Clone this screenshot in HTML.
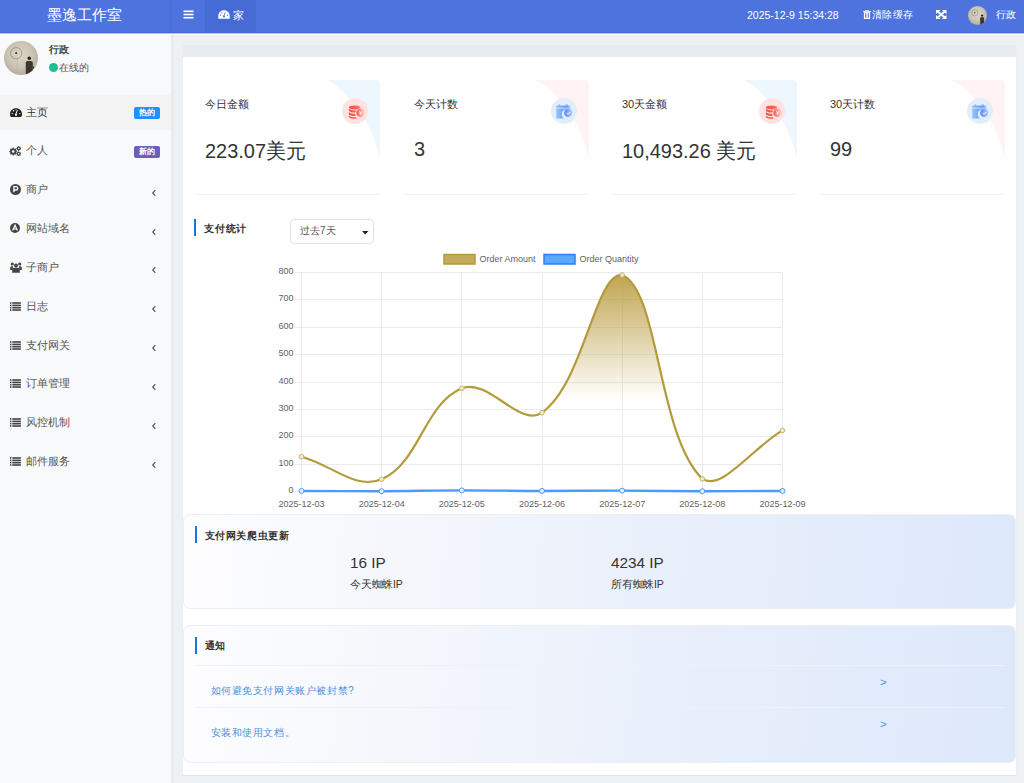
<!DOCTYPE html>
<html><head><meta charset="utf-8">
<style>
*{margin:0;padding:0;box-sizing:border-box}
html,body{width:1024px;height:783px;overflow:hidden;background:#eef1f4;font-family:"Liberation Sans",sans-serif;color:#333}
.abs{position:absolute}
#hdr{position:absolute;z-index:10;left:0;top:0;width:1024px;height:32px;background:#4e73df;box-shadow:0 1px 0 #4769d9,0 2px 0 #b4c2ef,0 3px 0 rgba(255,255,255,.7)}
#logo{position:absolute;left:0;top:-2px;width:168px;height:33px;color:#fff;font-size:15px;line-height:33px;text-align:center;font-weight:300}
#hdiv{position:absolute;left:170px;top:0;width:1px;height:32px;background:#4a6ed6}
#tab{position:absolute;left:205px;top:0;width:51px;height:32px;background:#476bd4}
.wt{color:#fff;font-size:11px;position:absolute;white-space:nowrap}
#side{position:absolute;left:0;top:33px;width:171px;height:750px;background:#f8f9fb}
#sshadow{position:absolute;left:171px;top:33px;width:4px;height:750px;background:linear-gradient(90deg,#e6eaed,#eef1f4)}
.mi{position:absolute;left:0;width:171px;height:35px}
.mi .t{position:absolute;left:26px;top:0;line-height:35px;font-size:11px;color:#555}
.mi .ic{position:absolute;left:9px;top:12px;width:12px;height:11px}
.chev{position:absolute;left:150px;top:15.5px;width:8px;height:10px}
.badge{position:absolute;left:134px;top:12.5px;width:26px;height:12px;border-radius:2px;color:#fff;font-size:8px;font-weight:bold;line-height:12px;text-align:center}
#panel{position:absolute;left:183px;top:45px;width:833px;height:730px;background:#fff;box-shadow:0 1px 1px rgba(0,0,0,.05)}
#phead{position:absolute;left:0;top:0;width:833px;height:12px;background:#e8ecef}
.card{position:absolute;top:80px;width:187px;height:114px;background:#fff;border-radius:4px;box-shadow:0 1px 0 rgba(0,0,0,.055);overflow:hidden}
.card .deco{position:absolute;right:0;top:0;width:60px;height:114px}
.card .lbl{position:absolute;left:12px;top:16.5px;font-size:11px;color:#333;white-space:nowrap}
.card .val{position:absolute;left:12px;top:57px;font-size:21px;transform:scaleX(.95);transform-origin:0 0;color:#333;white-space:nowrap}
.card .icb{position:absolute;left:149px;top:18px;width:26px;height:26px;border-radius:50%}
.sec{position:absolute;left:183px;width:833px;border-radius:7px;background:linear-gradient(95deg,#fdfdfe 0%,#f5f7fc 25%,#eaf0fb 55%,#dde8fb 100%);border:1px solid #eceff3}
.bar{position:absolute;width:2px;height:17px;background:#1a73e8}
.stitle{position:absolute;font-size:11px;font-weight:bold;color:#333;white-space:nowrap}
</style></head><body>
<div id="hdr">
  <div id="logo">墨逸工作室</div>
  <div id="hdiv"></div>
  <div id="tab"></div>
  <svg class="abs" style="left:183px;top:10px" width="11" height="9" viewBox="0 0 11 9"><rect x="0.5" y="0.5" width="10" height="1.6" fill="#fff"/><rect x="0.5" y="3.7" width="10" height="1.6" fill="#fff"/><rect x="0.5" y="6.9" width="10" height="1.6" fill="#fff"/></svg>
  <svg class="abs" style="left:218px;top:10px" width="12" height="9" viewBox="0 0 12 9"><path d="M6 0.3C2.8 0.3 0.3 2.8 0.3 6v2.7h11.4V6C11.7 2.8 9.2 0.3 6 0.3z" fill="#fff"/><circle cx="6" cy="6.5" r="1" fill="#476bd4"/><path d="M5.5 6.5L7.2 2.5" stroke="#476bd4" stroke-width="0.9"/><circle cx="2.5" cy="5.2" r=".6" fill="#476bd4"/><circle cx="9.5" cy="5.2" r=".6" fill="#476bd4"/><circle cx="3.8" cy="2.8" r=".6" fill="#476bd4"/></svg>
  <div class="wt" style="left:233px;top:7.5px;font-size:11px">家</div>
  <div class="wt" style="left:747px;top:9px;font-size:10.5px">2025-12-9 15:34:28</div>
  <svg class="abs" style="left:863px;top:10px" width="8" height="9" viewBox="0 0 8 9"><path d="M0 1.2h8v1H0z" fill="#fff"/><path d="M2.4 1.4V.4h3.2v1" stroke="#fff" stroke-width=".8" fill="none"/><path d="M.9 2.2h6.2V9H.9z" fill="#fff"/><rect x="2.1" y="3.2" width="1.2" height="4.6" fill="#7f6ce6"/><rect x="4.7" y="3.2" width="1.2" height="4.6" fill="#7f6ce6"/></svg>
  <div class="wt" style="left:871.5px;top:7.6px;font-size:10px;letter-spacing:.6px">清除缓存</div>
  <svg class="abs" style="left:936px;top:10px" width="10.5" height="9" viewBox="0 0 10.5 9"><path d="M0 0h4.6L0 4z M10.5 0H5.9L10.5 4z M0 9h4.6L0 5z M10.5 9H5.9L10.5 5z" fill="#fff"/><path d="M1.2 1.1L9.3 7.9M9.3 1.1L1.2 7.9" stroke="#fff" stroke-width="2"/></svg>
  <div class="abs" style="left:968px;top:6px;width:19px;height:19px;border-radius:50%;overflow:hidden;background:radial-gradient(circle at 48% 42%,#dcd6c8 0%,#cdc6b6 45%,#9f9889 100%)"><svg class="abs" style="left:0;top:0" width="19" height="19" viewBox="0 0 34 34"><circle cx="12.2" cy="12.2" r="5.6" fill="none" stroke="#8a8375" stroke-width="1"/><circle cx="12.2" cy="12.2" r="1.4" fill="#4a453d"/><circle cx="25.3" cy="17.2" r="2" fill="#1f1c19"/><path d="M21.8 34V21.8c0-1 .8-1.8 1.8-1.8h3.4c1 0 1.8.8 1.8 1.8V34z" fill="#3a3630"/></svg></div>
  <div class="wt" style="left:995.5px;top:7.6px;font-size:10px;letter-spacing:.5px">行政</div>
</div>

<div id="side">
  <div class="abs" style="left:0;top:0;width:171px;height:60px">
    <div class="abs" style="left:4px;top:8px;width:34px;height:34px;border-radius:50%;overflow:hidden;background:radial-gradient(circle at 48% 42%,#dcd6c8 0%,#cdc6b6 45%,#9f9889 100%)">
      <svg class="abs" style="left:0;top:0" width="34" height="34" viewBox="0 0 34 34"><circle cx="12.2" cy="12.2" r="5.6" fill="none" stroke="#8a8375" stroke-width=".7"/><circle cx="12.2" cy="12.2" r="1.1" fill="#4a453d"/><path d="M13.2 18v16" stroke="#b0a999" stroke-width=".5"/><circle cx="25.3" cy="17.2" r="1.7" fill="#1f1c19"/><path d="M21.8 34V21.8c0-1 .8-1.8 1.8-1.8h3.4c1 0 1.8.8 1.8 1.8V34z" fill="#3a3630"/><path d="M28.8 24l1.6 3-1.6 1z" fill="#3a3630"/></svg>
    </div>
    <div class="abs" style="left:49px;top:10px;font-size:10px;font-weight:bold;color:#444;white-space:nowrap;letter-spacing:.4px">行政</div>
    <div class="abs" style="left:49px;top:30px;width:9px;height:9px;border-radius:50%;background:#1fbf95"></div>
    <div class="abs" style="left:58.5px;top:28px;font-size:10px;color:#555;white-space:nowrap;letter-spacing:.3px">在线的</div>
  </div>
  <div class="mi" style="top:61.60px;background:#f3f3f4;"><div class="abs" style="left:0;top:17.5px"><svg class="abs" style="left:9.5px;top:-4.5px" width="12" height="9" viewBox="0 0 12 9"><path d="M6 0.2C2.7 0.2 0 2.8 0 6.1c0 1 .3 2 .8 2.8h10.4c.5-.8.8-1.8.8-2.8C12 2.8 9.3 0.2 6 0.2z" fill="#222"/><circle cx="6" cy="6.8" r="1.1" fill="#fff"/><path d="M5.6 6.8L7.4 2.2" stroke="#fff" stroke-width="1"/><circle cx="2.2" cy="5.6" r=".7" fill="#fff"/><circle cx="9.8" cy="5.6" r=".7" fill="#fff"/><circle cx="3.6" cy="2.8" r=".7" fill="#fff"/><circle cx="6" cy="1.8" r=".6" fill="#fff"/></svg></div><div class="t" style="color:#333">主页</div><div class="badge" style="background:#1e90ff">热的</div></div>
  <div class="mi" style="top:100.43px;"><div class="abs" style="left:0;top:17.5px"><svg class="abs" style="left:9px;top:-5px" width="12" height="10" viewBox="0 0 12 10"><g fill="#444"><circle cx="4.2" cy="5.5" r="3.1"/><g stroke="#444" stroke-width="1.3"><path d="M4.2 1.6v7.8M0.3 5.5h7.8M1.45 2.75l5.5 5.5M1.45 8.25l5.5-5.5"/></g><circle cx="9.7" cy="2.5" r="1.9"/><circle cx="9.7" cy="7.8" r="1.9"/><g stroke="#444" stroke-width="0.9"><path d="M9.7 0v5M7.2 2.5h5M8 0.8l3.4 3.4M8 4.2l3.4-3.4M9.7 5.3v5M7.2 7.8h5M8 6.1l3.4 3.4M8 9.5l3.4-3.4"/></g></g><circle cx="4.2" cy="5.5" r="1.3" fill="#f8f9fb"/><circle cx="9.7" cy="2.5" r=".75" fill="#f8f9fb"/><circle cx="9.7" cy="7.8" r=".75" fill="#f8f9fb"/></svg></div><div class="t" style="color:#555">个人</div><div class="badge" style="background:#6a5dbb">新的</div></div>
  <div class="mi" style="top:139.26px;"><div class="abs" style="left:0;top:17.5px"><svg class="abs" style="left:9.5px;top:-5.5px" width="11" height="11" viewBox="0 0 11 11"><circle cx="5.5" cy="5.5" r="5.5" fill="#444"/><path d="M3.9 8.3V2.7h2.2a1.6 1.6 0 0 1 0 3.3H3.9" stroke="#fff" stroke-width="1.3" fill="none"/></svg></div><div class="t" style="color:#555">商户</div><svg class="chev" viewBox="0 0 8 10"><path d="M5.3 2.2L2.8 5l2.5 2.8" stroke="#555" stroke-width="1.2" fill="none"/></svg></div>
  <div class="mi" style="top:178.09px;"><div class="abs" style="left:0;top:17.5px"><svg class="abs" style="left:10px;top:-5.5px" width="10" height="10" viewBox="0 0 10 10"><circle cx="5" cy="5" r="5" fill="#444"/><path d="M2.6 7.6L5 2.3l2.4 5.3M3.5 6h3" stroke="#fff" stroke-width="1.2" fill="none"/></svg></div><div class="t" style="color:#555">网站域名</div><svg class="chev" viewBox="0 0 8 10"><path d="M5.3 2.2L2.8 5l2.5 2.8" stroke="#555" stroke-width="1.2" fill="none"/></svg></div>
  <div class="mi" style="top:216.92px;"><div class="abs" style="left:0;top:17.5px"><svg class="abs" style="left:9.5px;top:-5.5px" width="12" height="11" viewBox="0 0 12 11"><g fill="#444"><circle cx="2.3" cy="2" r="1.6"/><circle cx="9.7" cy="2" r="1.6"/><circle cx="6" cy="3.6" r="2"/><path d="M0.2 8V5.8c0-.8.6-1.5 1.5-1.5h1.6c-.3.5-.5 1-.5 1.6V8z"/><path d="M11.8 8V5.8c0-.8-.6-1.5-1.5-1.5H8.7c.3.5.5 1 .5 1.6V8z"/><path d="M2.2 10.8V7.5c0-1 .8-1.8 1.8-1.8h4c1 0 1.8.8 1.8 1.8v3.3z"/></g></svg></div><div class="t" style="color:#555">子商户</div><svg class="chev" viewBox="0 0 8 10"><path d="M5.3 2.2L2.8 5l2.5 2.8" stroke="#555" stroke-width="1.2" fill="none"/></svg></div>
  <div class="mi" style="top:255.75px;"><div class="abs" style="left:0;top:17.5px"><svg class="abs" style="left:9.9px;top:-4.5px" width="11" height="9" viewBox="0 0 11 9"><g fill="#444"><rect x="0" y="0.2" width="1.4" height="1.6"/><rect x="0" y="2.6" width="1.4" height="1.6"/><rect x="0" y="4.9" width="1.4" height="1.6"/><rect x="0" y="7.2" width="1.4" height="1.6"/><rect x="2.3" y="0.2" width="8.6" height="1.6"/><rect x="2.3" y="2.6" width="8.6" height="1.6"/><rect x="2.3" y="4.9" width="8.6" height="1.6"/><rect x="2.3" y="7.2" width="8.6" height="1.6"/></g></svg></div><div class="t" style="color:#555">日志</div><svg class="chev" viewBox="0 0 8 10"><path d="M5.3 2.2L2.8 5l2.5 2.8" stroke="#555" stroke-width="1.2" fill="none"/></svg></div>
  <div class="mi" style="top:294.58px;"><div class="abs" style="left:0;top:17.5px"><svg class="abs" style="left:9.9px;top:-4.5px" width="11" height="9" viewBox="0 0 11 9"><g fill="#444"><rect x="0" y="0.2" width="1.4" height="1.6"/><rect x="0" y="2.6" width="1.4" height="1.6"/><rect x="0" y="4.9" width="1.4" height="1.6"/><rect x="0" y="7.2" width="1.4" height="1.6"/><rect x="2.3" y="0.2" width="8.6" height="1.6"/><rect x="2.3" y="2.6" width="8.6" height="1.6"/><rect x="2.3" y="4.9" width="8.6" height="1.6"/><rect x="2.3" y="7.2" width="8.6" height="1.6"/></g></svg></div><div class="t" style="color:#555">支付网关</div><svg class="chev" viewBox="0 0 8 10"><path d="M5.3 2.2L2.8 5l2.5 2.8" stroke="#555" stroke-width="1.2" fill="none"/></svg></div>
  <div class="mi" style="top:333.41px;"><div class="abs" style="left:0;top:17.5px"><svg class="abs" style="left:9.9px;top:-4.5px" width="11" height="9" viewBox="0 0 11 9"><g fill="#444"><rect x="0" y="0.2" width="1.4" height="1.6"/><rect x="0" y="2.6" width="1.4" height="1.6"/><rect x="0" y="4.9" width="1.4" height="1.6"/><rect x="0" y="7.2" width="1.4" height="1.6"/><rect x="2.3" y="0.2" width="8.6" height="1.6"/><rect x="2.3" y="2.6" width="8.6" height="1.6"/><rect x="2.3" y="4.9" width="8.6" height="1.6"/><rect x="2.3" y="7.2" width="8.6" height="1.6"/></g></svg></div><div class="t" style="color:#555">订单管理</div><svg class="chev" viewBox="0 0 8 10"><path d="M5.3 2.2L2.8 5l2.5 2.8" stroke="#555" stroke-width="1.2" fill="none"/></svg></div>
  <div class="mi" style="top:372.24px;"><div class="abs" style="left:0;top:17.5px"><svg class="abs" style="left:9.9px;top:-4.5px" width="11" height="9" viewBox="0 0 11 9"><g fill="#444"><rect x="0" y="0.2" width="1.4" height="1.6"/><rect x="0" y="2.6" width="1.4" height="1.6"/><rect x="0" y="4.9" width="1.4" height="1.6"/><rect x="0" y="7.2" width="1.4" height="1.6"/><rect x="2.3" y="0.2" width="8.6" height="1.6"/><rect x="2.3" y="2.6" width="8.6" height="1.6"/><rect x="2.3" y="4.9" width="8.6" height="1.6"/><rect x="2.3" y="7.2" width="8.6" height="1.6"/></g></svg></div><div class="t" style="color:#555">风控机制</div><svg class="chev" viewBox="0 0 8 10"><path d="M5.3 2.2L2.8 5l2.5 2.8" stroke="#555" stroke-width="1.2" fill="none"/></svg></div>
  <div class="mi" style="top:411.07px;"><div class="abs" style="left:0;top:17.5px"><svg class="abs" style="left:9.9px;top:-4.5px" width="11" height="9" viewBox="0 0 11 9"><g fill="#444"><rect x="0" y="0.2" width="1.4" height="1.6"/><rect x="0" y="2.6" width="1.4" height="1.6"/><rect x="0" y="4.9" width="1.4" height="1.6"/><rect x="0" y="7.2" width="1.4" height="1.6"/><rect x="2.3" y="0.2" width="8.6" height="1.6"/><rect x="2.3" y="2.6" width="8.6" height="1.6"/><rect x="2.3" y="4.9" width="8.6" height="1.6"/><rect x="2.3" y="7.2" width="8.6" height="1.6"/></g></svg></div><div class="t" style="color:#555">邮件服务</div><svg class="chev" viewBox="0 0 8 10"><path d="M5.3 2.2L2.8 5l2.5 2.8" stroke="#555" stroke-width="1.2" fill="none"/></svg></div>
</div>
<div id="sshadow"></div>

<div id="panel"><div id="phead"></div></div>
<div class="card" style="left:193px">
  <svg class="abs" style="left:0;top:0" width="187" height="114"><path d="M134 0H187V79C180 45 160 15 134 0z" fill="#eef6fe"/></svg>
  <div class="lbl">今日金额</div><div class="val">223.07美元</div>
  <div class="icb" style="background:#ffe3e3"><svg class="abs" style="left:0;top:0" width="26" height="26" viewBox="0 0 26 26"><defs><linearGradient id="gc0" x1="6" y1="0" x2="23" y2="0" gradientUnits="userSpaceOnUse"><stop offset="0" stop-color="#f5493d"/><stop offset=".55" stop-color="#f8685d"/><stop offset="1" stop-color="#ffd9d5"/></linearGradient></defs><g fill="url(#gc0)"><ellipse cx="12.7" cy="9.4" rx="5.8" ry="2"/><path d="M6.9 10.6c.6 1 2.9 1.8 5.8 1.8 .6 0 1.2 0 1.7-.1-.6.7-1 1.5-1.1 2.3h-.6c-2.9 0-5.2-.8-5.8-1.8z"/><path d="M6.9 14c.6 1 2.9 1.8 5.8 1.8h.5c0 .8.2 1.5.5 2.2h-1c-2.9 0-5.2-.8-5.8-1.8z"/><path d="M6.9 17.4c.6 1 2.9 1.8 5.8 1.8h1.2c.3.5.7.9 1.1 1.3-.7.2-1.5.3-2.3.3-2.9 0-5.2-.8-5.8-1.8z"/><circle cx="18.5" cy="14.7" r="4.3"/></g><path d="M17 13l1.5 1.6 1.5-1.6M16.9 15h3.2M18.5 14.6v2.4" stroke="#fff" stroke-opacity=".85" stroke-width=".75" fill="none"/></svg></div>
</div>
<div class="card" style="left:402px">
  <svg class="abs" style="left:0;top:0" width="187" height="114"><path d="M134 0H187V79C180 45 160 15 134 0z" fill="#fff3f3"/></svg>
  <div class="lbl">今天计数</div><div class="val">3</div>
  <div class="icb" style="background:#e3eefc"><svg class="abs" style="left:0;top:0" width="26" height="26" viewBox="0 0 26 26"><defs><linearGradient id="gb1" x1="5" y1="0" x2="22" y2="0" gradientUnits="userSpaceOnUse"><stop offset="0" stop-color="#9cc6ff"/><stop offset=".6" stop-color="#5f93f8"/><stop offset="1" stop-color="#c9dcff"/></linearGradient></defs><g fill="url(#gb1)"><rect x="7.6" y="6.4" width="1.3" height="2.4"/><rect x="15.4" y="6.4" width="1.3" height="2.4"/><path d="M5.2 8.2c0-.4.3-.7.7-.7h12.6c.4 0 .7.3.7.7v1.5H5.2z"/><path d="M5.2 10.6h14v1.3a5.3 5.3 0 0 0-6.4 8.5H5.9c-.4 0-.7-.3-.7-.7z"/><circle cx="17.3" cy="14.7" r="4.3"/></g><path d="M15.5 14.8l1.4 1.4 2.2-2.3" stroke="#fff" stroke-width=".9" fill="none"/></svg></div>
</div>
<div class="card" style="left:610px">
  <svg class="abs" style="left:0;top:0" width="187" height="114"><path d="M134 0H187V79C180 45 160 15 134 0z" fill="#eef6fe"/></svg>
  <div class="lbl">30天金额</div><div class="val">10,493.26 美元</div>
  <div class="icb" style="background:#ffe3e3"><svg class="abs" style="left:0;top:0" width="26" height="26" viewBox="0 0 26 26"><defs><linearGradient id="gc2" x1="6" y1="0" x2="23" y2="0" gradientUnits="userSpaceOnUse"><stop offset="0" stop-color="#f5493d"/><stop offset=".55" stop-color="#f8685d"/><stop offset="1" stop-color="#ffd9d5"/></linearGradient></defs><g fill="url(#gc2)"><ellipse cx="12.7" cy="9.4" rx="5.8" ry="2"/><path d="M6.9 10.6c.6 1 2.9 1.8 5.8 1.8 .6 0 1.2 0 1.7-.1-.6.7-1 1.5-1.1 2.3h-.6c-2.9 0-5.2-.8-5.8-1.8z"/><path d="M6.9 14c.6 1 2.9 1.8 5.8 1.8h.5c0 .8.2 1.5.5 2.2h-1c-2.9 0-5.2-.8-5.8-1.8z"/><path d="M6.9 17.4c.6 1 2.9 1.8 5.8 1.8h1.2c.3.5.7.9 1.1 1.3-.7.2-1.5.3-2.3.3-2.9 0-5.2-.8-5.8-1.8z"/><circle cx="18.5" cy="14.7" r="4.3"/></g><path d="M17 13l1.5 1.6 1.5-1.6M16.9 15h3.2M18.5 14.6v2.4" stroke="#fff" stroke-opacity=".85" stroke-width=".75" fill="none"/></svg></div>
</div>
<div class="card" style="left:818px">
  <svg class="abs" style="left:0;top:0" width="187" height="114"><path d="M134 0H187V79C180 45 160 15 134 0z" fill="#fff3f3"/></svg>
  <div class="lbl">30天计数</div><div class="val">99</div>
  <div class="icb" style="background:#e3eefc"><svg class="abs" style="left:0;top:0" width="26" height="26" viewBox="0 0 26 26"><defs><linearGradient id="gb3" x1="5" y1="0" x2="22" y2="0" gradientUnits="userSpaceOnUse"><stop offset="0" stop-color="#9cc6ff"/><stop offset=".6" stop-color="#5f93f8"/><stop offset="1" stop-color="#c9dcff"/></linearGradient></defs><g fill="url(#gb3)"><rect x="7.6" y="6.4" width="1.3" height="2.4"/><rect x="15.4" y="6.4" width="1.3" height="2.4"/><path d="M5.2 8.2c0-.4.3-.7.7-.7h12.6c.4 0 .7.3.7.7v1.5H5.2z"/><path d="M5.2 10.6h14v1.3a5.3 5.3 0 0 0-6.4 8.5H5.9c-.4 0-.7-.3-.7-.7z"/><circle cx="17.3" cy="14.7" r="4.3"/></g><path d="M15.5 14.8l1.4 1.4 2.2-2.3" stroke="#fff" stroke-width=".9" fill="none"/></svg></div>
</div>
<div class="bar" style="left:194px;top:219px"></div><div class="stitle" style="left:204px;top:221.5px;font-size:10px;letter-spacing:.75px">支付统计</div>
<div class="abs" style="left:290px;top:219px;width:84px;height:25px;border:1px solid #dfe3e8;border-radius:4px;background:#fff"><div class="abs" style="left:8.5px;top:3.5px;font-size:10px;color:#555;white-space:nowrap;letter-spacing:.2px">过去7天</div><svg class="abs" style="left:71px;top:11px" width="7" height="4"><path d="M0 0h6.5L3.25 3.5z" fill="#222"/></svg></div>
<!--CHART--><svg class="abs" style="left:0;top:0" width="1024" height="783" viewBox="0 0 1024 783"><defs><linearGradient id="fillg" x1="0" y1="272.5" x2="0" y2="400" gradientUnits="userSpaceOnUse"><stop offset="0" stop-color="#b8993b" stop-opacity=".9"/><stop offset="1" stop-color="#b8993b" stop-opacity="0"/></linearGradient></defs><line x1="295" y1="272.5" x2="783.0" y2="272.5" stroke="#ebebeb" stroke-width="1"/><text x="293.5" y="274.1" text-anchor="end" font-family="Liberation Sans" font-size="9" fill="#5f5f5f">800</text><line x1="295" y1="299.5" x2="783.0" y2="299.5" stroke="#ebebeb" stroke-width="1"/><text x="293.5" y="301.1" text-anchor="end" font-family="Liberation Sans" font-size="9" fill="#5f5f5f">700</text><line x1="295" y1="327.5" x2="783.0" y2="327.5" stroke="#ebebeb" stroke-width="1"/><text x="293.5" y="329.1" text-anchor="end" font-family="Liberation Sans" font-size="9" fill="#5f5f5f">600</text><line x1="295" y1="354.5" x2="783.0" y2="354.5" stroke="#ebebeb" stroke-width="1"/><text x="293.5" y="356.1" text-anchor="end" font-family="Liberation Sans" font-size="9" fill="#5f5f5f">500</text><line x1="295" y1="382.5" x2="783.0" y2="382.5" stroke="#ebebeb" stroke-width="1"/><text x="293.5" y="384.1" text-anchor="end" font-family="Liberation Sans" font-size="9" fill="#5f5f5f">400</text><line x1="295" y1="409.5" x2="783.0" y2="409.5" stroke="#ebebeb" stroke-width="1"/><text x="293.5" y="411.1" text-anchor="end" font-family="Liberation Sans" font-size="9" fill="#5f5f5f">300</text><line x1="295" y1="436.5" x2="783.0" y2="436.5" stroke="#ebebeb" stroke-width="1"/><text x="293.5" y="438.1" text-anchor="end" font-family="Liberation Sans" font-size="9" fill="#5f5f5f">200</text><line x1="295" y1="464.5" x2="783.0" y2="464.5" stroke="#ebebeb" stroke-width="1"/><text x="293.5" y="466.1" text-anchor="end" font-family="Liberation Sans" font-size="9" fill="#5f5f5f">100</text><line x1="295" y1="491.5" x2="783.0" y2="491.5" stroke="#ebebeb" stroke-width="1"/><text x="293.5" y="493.1" text-anchor="end" font-family="Liberation Sans" font-size="9" fill="#5f5f5f">0</text><line x1="301.5" y1="272.5" x2="301.5" y2="498" stroke="#ebebeb" stroke-width="1"/><text x="301.5" y="507.2" text-anchor="middle" font-family="Liberation Sans" font-size="9" fill="#5f5f5f">2025-12-03</text><line x1="381.5" y1="272.5" x2="381.5" y2="498" stroke="#ebebeb" stroke-width="1"/><text x="381.7" y="507.2" text-anchor="middle" font-family="Liberation Sans" font-size="9" fill="#5f5f5f">2025-12-04</text><line x1="461.5" y1="272.5" x2="461.5" y2="498" stroke="#ebebeb" stroke-width="1"/><text x="461.8" y="507.2" text-anchor="middle" font-family="Liberation Sans" font-size="9" fill="#5f5f5f">2025-12-05</text><line x1="542.5" y1="272.5" x2="542.5" y2="498" stroke="#ebebeb" stroke-width="1"/><text x="542.0" y="507.2" text-anchor="middle" font-family="Liberation Sans" font-size="9" fill="#5f5f5f">2025-12-06</text><line x1="622.5" y1="272.5" x2="622.5" y2="498" stroke="#ebebeb" stroke-width="1"/><text x="622.2" y="507.2" text-anchor="middle" font-family="Liberation Sans" font-size="9" fill="#5f5f5f">2025-12-07</text><line x1="702.5" y1="272.5" x2="702.5" y2="498" stroke="#ebebeb" stroke-width="1"/><text x="702.3" y="507.2" text-anchor="middle" font-family="Liberation Sans" font-size="9" fill="#5f5f5f">2025-12-08</text><line x1="782.5" y1="272.5" x2="782.5" y2="498" stroke="#ebebeb" stroke-width="1"/><text x="782.5" y="507.2" text-anchor="middle" font-family="Liberation Sans" font-size="9" fill="#5f5f5f">2025-12-09</text><path d="M301.50 456.73 C333.57 465.71 355.55 490.33 381.67 479.18 C419.68 462.95 423.92 404.03 461.83 388.30 C488.05 377.42 519.90 428.28 542.00 412.66 C584.03 382.95 595.17 272.50 622.17 274.96 C659.30 290.31 657.41 435.34 702.33 478.91 C721.54 491.50 750.43 449.82 782.50 430.43 L782.5 491.5 L301.5 491.5z" fill="url(#fillg)"/><path d="M301.50 456.73 C333.57 465.71 355.55 490.33 381.67 479.18 C419.68 462.95 423.92 404.03 461.83 388.30 C488.05 377.42 519.90 428.28 542.00 412.66 C584.03 382.95 595.17 272.50 622.17 274.96 C659.30 290.31 657.41 435.34 702.33 478.91 C721.54 491.50 750.43 449.82 782.50 430.43" stroke="#b39a3b" stroke-width="2.2" fill="none"/><circle cx="301.50" cy="456.73" r="2.3" fill="#f1e9cf" stroke="#c8b372" stroke-width="1"/><circle cx="381.67" cy="479.18" r="2.3" fill="#f1e9cf" stroke="#c8b372" stroke-width="1"/><circle cx="461.83" cy="388.30" r="2.3" fill="#f1e9cf" stroke="#c8b372" stroke-width="1"/><circle cx="542.00" cy="412.66" r="2.3" fill="#f1e9cf" stroke="#c8b372" stroke-width="1"/><circle cx="622.17" cy="274.96" r="2.3" fill="#f1e9cf" stroke="#c8b372" stroke-width="1"/><circle cx="702.33" cy="478.91" r="2.3" fill="#f1e9cf" stroke="#c8b372" stroke-width="1"/><circle cx="782.50" cy="430.43" r="2.3" fill="#f1e9cf" stroke="#c8b372" stroke-width="1"/><path d="M301.50 490.93 C333.57 491.04 349.60 491.31 381.67 491.20 C413.73 491.09 429.77 490.43 461.83 490.38 C493.90 490.32 509.93 490.87 542.00 490.93 C574.07 490.98 590.10 490.60 622.17 490.65 C654.23 490.71 670.27 491.15 702.33 491.20 C734.40 491.25 750.43 491.04 782.50 490.93" stroke="#4a9bff" stroke-width="2.4" fill="none"/><circle cx="301.50" cy="490.93" r="2.5" fill="#e3efff" stroke="#4a9bff" stroke-width="1"/><circle cx="381.67" cy="491.20" r="2.5" fill="#e3efff" stroke="#4a9bff" stroke-width="1"/><circle cx="461.83" cy="490.38" r="2.5" fill="#e3efff" stroke="#4a9bff" stroke-width="1"/><circle cx="542.00" cy="490.93" r="2.5" fill="#e3efff" stroke="#4a9bff" stroke-width="1"/><circle cx="622.17" cy="490.65" r="2.5" fill="#e3efff" stroke="#4a9bff" stroke-width="1"/><circle cx="702.33" cy="491.20" r="2.5" fill="#e3efff" stroke="#4a9bff" stroke-width="1"/><circle cx="782.50" cy="490.93" r="2.5" fill="#e3efff" stroke="#4a9bff" stroke-width="1"/><rect x="444" y="254.5" width="31" height="9.5" fill="#c4ab5c" stroke="#b39a3b" stroke-width="1.5"/><text x="479.5" y="261.7" font-family="Liberation Sans" font-size="9" fill="#5f5f5f">Order Amount</text><rect x="544" y="254.5" width="31" height="9.5" fill="#5aa9ff" stroke="#2b7fff" stroke-width="1.5"/><text x="579.5" y="261.7" font-family="Liberation Sans" font-size="9" fill="#5f5f5f">Order Quantity</text></svg><!--/CHART-->
<div class="sec" style="top:514px;height:95px"></div>
<div class="bar" style="left:195px;top:526px"></div><div class="stitle" style="left:204.5px;top:529px;font-size:10px;letter-spacing:.65px">支付网关爬虫更新</div>
<div class="abs" style="left:350px;top:553.5px;font-size:15.3px;color:#333;white-space:nowrap">16 IP</div>
<div class="abs" style="left:350px;top:577.5px;font-size:10.5px;letter-spacing:-.25px;color:#333;white-space:nowrap">今天蜘蛛IP</div>
<div class="abs" style="left:611px;top:553.5px;font-size:15.3px;color:#333;white-space:nowrap">4234 IP</div>
<div class="abs" style="left:611px;top:577.5px;font-size:10.5px;letter-spacing:-.25px;color:#333;white-space:nowrap">所有蜘蛛IP</div>
<div class="sec" style="top:625px;height:138px"></div>
<div class="bar" style="left:195px;top:637px"></div><div class="stitle" style="left:204.5px;top:638.5px;font-size:10px;letter-spacing:.8px">通知</div>
<div class="abs" style="left:195px;top:665px;width:809px;height:1px;background:#eef2f8"></div>
<div class="abs" style="left:195px;top:707px;width:809px;height:1px;background:#eef2f8"></div>
<div class="abs" style="left:210.5px;top:684px;font-size:10px;letter-spacing:.6px;color:#4a90e2;white-space:nowrap">如何避免支付网关账户被封禁?</div>
<div class="abs" style="left:880px;top:676px;font-size:11.5px;color:#4a90e2">&gt;</div>
<div class="abs" style="left:210.5px;top:726px;font-size:10px;letter-spacing:.6px;color:#4a90e2;white-space:nowrap">安装和使用文档。</div>
<div class="abs" style="left:880px;top:718px;font-size:11.5px;color:#4a90e2">&gt;</div>


</body></html>
